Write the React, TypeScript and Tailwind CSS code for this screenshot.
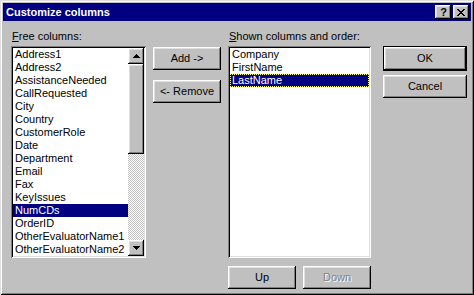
import React from 'react';

const freeColumns = [
  'Address1',
  'Address2',
  'AssistanceNeeded',
  'CallRequested',
  'City',
  'Country',
  'CustomerRole',
  'Date',
  'Department',
  'Email',
  'Fax',
  'KeyIssues',
  'NumCDs',
  'OrderID',
  'OtherEvaluatorName1',
  'OtherEvaluatorName2',
];

const shownColumns = ['Company', 'FirstName', 'LastName'];

const raised =
  'bg-[#c0c0c0] shadow-[inset_-1px_-1px_#000,inset_1px_1px_#fff,inset_-2px_-2px_#808080,inset_2px_2px_#dfdfdf]';
const sunken =
  'bg-white p-[2px] shadow-[inset_1px_1px_#808080,inset_-1px_-1px_#fff,inset_2px_2px_#000,inset_-2px_-2px_#dfdfdf]';

function Button({
  children,
  className = '',
  disabled = false,
}: {
  children: React.ReactNode;
  className?: string;
  disabled?: boolean;
}) {
  return (
    <div
      className={`h-[23px] flex items-center justify-center text-[11px] leading-[13px] ${raised} ${
        disabled ? 'text-[#808080] [text-shadow:1px_1px_0_#fff]' : 'text-black'
      } ${className}`}
    >
      {children}
    </div>
  );
}

function Arrow({ down = false }: { down?: boolean }) {
  return (
    <svg width="7" height="4" viewBox="0 0 7 4" shapeRendering="crispEdges">
      {down ? (
        <path d="M0 0h7v1H0zM1 1h5v1H1zM2 2h3v1H2zM3 3h1v1H3z" fill="#000" />
      ) : (
        <path d="M3 0h1v1H3zM2 1h3v1H2zM1 2h5v1H1zM0 3h7v1H0z" fill="#000" />
      )}
    </svg>
  );
}

function Scrollbar() {
  return (
    <div className="w-[16px] h-full flex flex-col">
      <div className={`w-[16px] h-[16px] flex items-center justify-center ${raised}`}>
        <Arrow />
      </div>
      <div className={`w-[16px] h-[90px] ${raised}`} />
      <div className="flex-1 bg-[repeating-conic-gradient(#fff_0_25%,#c0c0c0_0_50%)] bg-[length:2px_2px]" />
      <div className={`w-[16px] h-[16px] flex items-center justify-center ${raised}`}>
        <Arrow down />
      </div>
    </div>
  );
}

export default function App() {
  return (
    <div className="w-[474px] h-[295px] bg-[#c0c0c0] p-[3px] font-['Liberation_Sans',Arial,sans-serif] shadow-[inset_1px_1px_#dfdfdf,inset_-1px_-1px_#000,inset_2px_2px_#fff,inset_-2px_-2px_#808080] overflow-hidden">
      {/* title bar */}
      <div className="h-[18px] bg-[#000080] flex items-center pl-[3px] pr-[2px]">
        <span className="text-white font-bold text-[11px] leading-[13px] flex-1">Customize columns</span>
        <div className={`w-[16px] h-[14px] flex items-center justify-center ${raised}`}>
          <span className="font-bold text-[11px] leading-[11px] text-black pl-[1px]">?</span>
        </div>
        <div className={`w-[16px] h-[14px] ml-[2px] flex items-center justify-center ${raised}`}>
          <svg width="8" height="7" viewBox="0 0 8 7" shapeRendering="crispEdges">
            <path
              d="M0 0h2v1H0zM6 0h2v1H6zM1 1h2v1H1zM5 1h2v1H5zM2 2h4v1H2zM3 3h2v1H3zM2 4h4v1H2zM1 5h2v1H1zM5 5h2v1H5zM0 6h2v1H0zM6 6h2v1H6z"
              fill="#000"
            />
          </svg>
        </div>
      </div>

      {/* body */}
      <div className="flex pl-[8px] pt-[9px] text-[11px] leading-[13px] text-black">
        <div className="w-[135px] flex flex-col">
          <div className="h-[13px] mb-[3px] pl-[1px]">
            <span className="underline underline-offset-[1px]">F</span>ree columns:
          </div>
          <div className={`h-[212px] flex ${sunken}`}>
            <div className="flex-1 flex flex-col">
              {freeColumns.map((c) => (
                <div
                  key={c}
                  className={`h-[13px] pl-[2px] whitespace-nowrap ${
                    c === 'NumCDs' ? 'bg-[#000080] text-white' : ''
                  }`}
                >
                  {c}
                </div>
              ))}
            </div>
            <Scrollbar />
          </div>
        </div>

        <div className="w-[68px] ml-[7px] pt-[17px] flex flex-col gap-[10px]">
          <Button>Add -&gt;</Button>
          <Button>&lt;- Remove</Button>
        </div>

        <div className="w-[143px] ml-[7px] flex flex-col">
          <div className="h-[13px] mb-[3px] pl-[1px]">
            <span className="underline underline-offset-[1px]">S</span>hown columns and order:
          </div>
          <div className={`h-[212px] ${sunken}`}>
            {shownColumns.map((c) => (
              <div
                key={c}
                className={`h-[13px] pl-[2px] ${
                  c === 'LastName'
                    ? 'bg-[#000080] text-white outline-1 outline-dotted outline-[#ffff80] -outline-offset-1'
                    : ''
                }`}
              >
                {c}
              </div>
            ))}
          </div>
          <div className="flex gap-[7px] mt-[8px]">
            <Button className="w-[68px]">Up</Button>
            <Button className="w-[68px]" disabled>
              Down
            </Button>
          </div>
        </div>

        <div className="w-[84px] ml-[12px] pt-[16px] flex flex-col gap-[4px]">
          <div className="border border-black">
            <Button className="h-[21px]">OK</Button>
          </div>
          <Button>Cancel</Button>
        </div>
      </div>
    </div>
  );
}
